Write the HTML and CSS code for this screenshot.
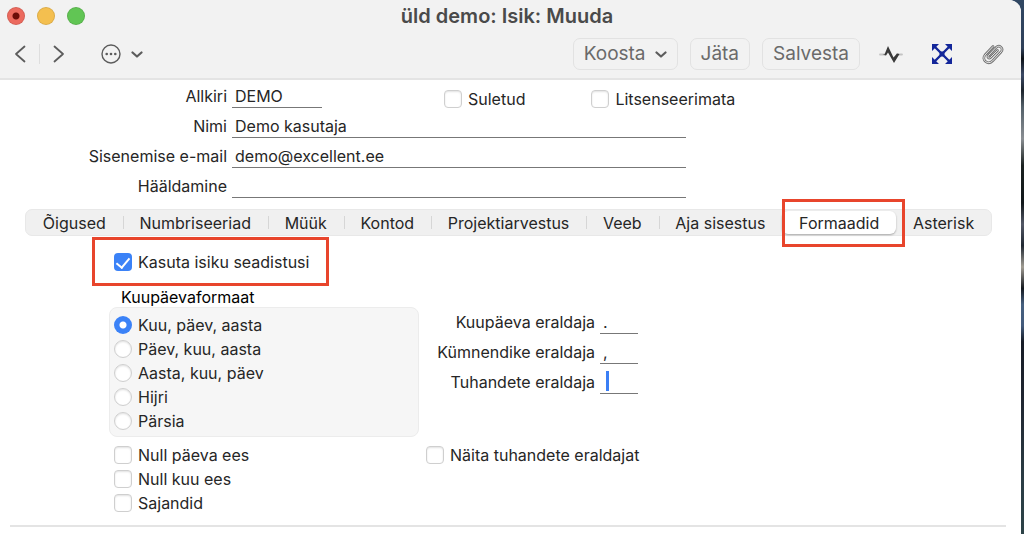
FILE: index.html
```html
<!DOCTYPE html>
<html lang="et">
    <head>
        <meta charset="utf-8">
        <meta name="viewport" content="width=device-width, initial-scale=1">
        <title>üld demo: Isik: Muuda</title>
        <link rel="stylesheet" href="styles.css">
    </head>
    <body>
        <div class="window">
            <header class="header">
                <div class="titlebar">
                    <div class="lights">
                        <span class="light close"></span>
                        <span class="light minimize"></span>
                        <span class="light maximize"></span>
                    </div>
                    <h1 class="title">üld demo: Isik: Muuda</h1>
                </div>
                <div class="toolbar">
                    <button class="iconBtn" type="button" aria-label="Eelmine">
                        <svg width="20" height="20" viewBox="0 0 20 20"><path d="M14.500 2.500L6 10l8.500 7.500"/></svg>
                    </button>
                    <span class="toolLine"></span>
                    <button class="iconBtn" type="button" aria-label="Järgmine">
                        <svg width="20" height="20" viewBox="0 0 20 20"><path d="M5.500 2.500L14 10l-8.500 7.500"/></svg>
                    </button>
                    <button class="iconBtn more" type="button" aria-label="Valikud">
                        <svg width="20" height="20" viewBox="0 0 20 20"><circle cx="10" cy="10" r="9" stroke-width="1.400"/><g class="solid"><circle cx="5.700" cy="10" r="1.300"/><circle cx="10" cy="10" r="1.300"/><circle cx="14.300" cy="10" r="1.300"/></g></svg>
                        <svg width="12" height="20" viewBox="0 0 12 20"><path d="M1.500 8.500l4.500 4 4.500-4" stroke-width="2.200"/></svg>
                    </button>
                    <div class="actions">
                        <button class="btn" type="button">Koosta
                            <svg width="12" height="20" viewBox="0 0 12 20"><path d="M1.500 8.500l4.500 4 4.500-4" stroke-width="2.200"/></svg>
                        </button>
                        <button class="btn" type="button">Jäta</button>
                        <button class="btn" type="button">Salvesta</button>
                    </div>
                    <div class="tools">
                        <button class="iconBtn" type="button" aria-label="Tegevused">
                            <svg width="24" height="24" viewBox="0 0 24 24"><path class="faint" d="M1 12.500h5M18 12.500h5"/><path class="pulse" d="M3.500 12.500h2L9 4l5.500 11.500L18 11.500l2.500 0.500-5.500 9L9 10.500l-2 3z"/></svg>
                        </button>
                        <button class="iconBtn" type="button" aria-label="Lingid">
                            <svg width="22" height="22" viewBox="0 0 22 22"><path class="cross" d="M1 1h7L1 8zM21 1v7l-7-7zM1 21v-7l7 7zM21 21h-7l7-7zM8.500 8.500h5v5h-5z"/><path class="crossLine" d="M4 4l14 14M18 4L4 18"/></svg>
                        </button>
                        <button class="iconBtn" type="button" aria-label="Manused">
                            <svg width="24" height="24" viewBox="0 0 24 24"><path class="clip" d="M16.500 8.500L9.500 15.500C8 17 6 15.500 7.500 13.500L15 5.500C18.500 2 23 6.500 20 10L11.500 19C7 23.500 0 18 4 13L12 4.500"/><path class="clipInner" d="M16.500 8.500L9.500 15.500C8 17 6 15.500 7.500 13.500L15 5.500C18.500 2 23 6.500 20 10L11.500 19C7 23.500 0 18 4 13L12 4.500"/></svg>
                        </button>
                    </div>
                </div>
            </header>

            <form class="content">
                <div class="person">
                    <label for="signature">Allkiri</label>
                    <div class="line">
                        <input class="field short" id="signature" type="text" value="DEMO">
                        <div class="flags">
                            <label class="check"><input type="checkbox">Suletud</label>
                            <label class="check"><input type="checkbox">Litsenseerimata</label>
                        </div>
                    </div>
                    <label for="name">Nimi</label>
                    <input class="field" id="name" type="text" value="Demo kasutaja">
                    <label for="email">Sisenemise e-mail</label>
                    <input class="field" id="email" type="text" value="demo@excellent.ee">
                    <label for="spoken">Hääldamine</label>
                    <input class="field" id="spoken" type="text">
                </div>

                <nav class="tabs">
                    <button class="tab" type="button">Õigused</button>
                    <button class="tab" type="button">Numbriseeriad</button>
                    <button class="tab" type="button">Müük</button>
                    <button class="tab" type="button">Kontod</button>
                    <button class="tab" type="button">Projektiarvestus</button>
                    <button class="tab" type="button">Veeb</button>
                    <button class="tab" type="button">Aja sisestus</button>
                    <button class="tab active" type="button">Formaadid<span class="marker"></span></button>
                    <button class="tab" type="button">Asterisk</button>
                </nav>

                <label class="check useOwn"><input type="checkbox" checked>Kasuta isiku seadistusi</label>

                <div class="formats">
                    <div class="dateFormat" role="radiogroup" aria-labelledby="dateTitle">
                        <div class="groupTitle" id="dateTitle">Kuupäevaformaat</div>
                        <div class="group">
                            <label class="check"><input type="radio" name="date" checked>Kuu, päev, aasta</label>
                            <label class="check"><input type="radio" name="date">Päev, kuu, aasta</label>
                            <label class="check"><input type="radio" name="date">Aasta, kuu, päev</label>
                            <label class="check"><input type="radio" name="date">Hijri</label>
                            <label class="check"><input type="radio" name="date">Pärsia</label>
                        </div>
                    </div>
                    <div class="separators">
                        <label for="dateSep">Kuupäeva eraldaja</label>
                        <input class="field" id="dateSep" type="text" value=".">
                        <label for="decimalSep">Kümnendike eraldaja</label>
                        <input class="field" id="decimalSep" type="text" value=",">
                        <label for="thousandSep">Tuhandete eraldaja</label>
                        <div class="caretBox">
                            <input class="field" id="thousandSep" type="text">
                            <span class="caret"></span>
                        </div>
                    </div>
                    <div class="zeros">
                        <label class="check"><input type="checkbox">Null päeva ees</label>
                        <label class="check"><input type="checkbox">Null kuu ees</label>
                        <label class="check"><input type="checkbox">Sajandid</label>
                    </div>
                    <div>
                        <label class="check"><input type="checkbox">Näita tuhandete eraldajat</label>
                    </div>
                </div>
                <hr class="rule">
            </form>
        </div>
    </body>
</html>
```

FILE: styles.css
```css
*{
    box-sizing: border-box;
}

body{
    margin: 0;
    padding-right: 3px;
    background: linear-gradient(#304763 0%, #2f4059 9%, #0d1218 11%, #3c4a66 14%, #1c242c 17%, #536069 20%, #8a8f93 26%, #1a2120 31%, #10171a 38%, #535866 42%, #202832 46%, #a09c93 50%, #14181f 54%, #46607f 57%, #435b7c 61%, #161c26 64%, #202631 75%, #2b3d45 90%, #2c4247 100%);
    font-family: Inter, "Liberation Sans", sans-serif;
    font-size: 16px;
    line-height: 20px;
    color: #262626;
}

button, input{
    font: inherit;
    color: inherit;
    margin: 0;
}

button{
    border: none;
    background: none;
    padding: 0;
}

.window{
    min-height: 100vh;
    background: #fff;
    border-top-right-radius: 12px;
    overflow: hidden;
}

/* title bar and tools */
.header{
    background: #f2f2f2;
    border-bottom: 2px solid #e4e4e4;
}

.titlebar{
    display: grid;
    grid-template-columns: 1fr auto 1fr;
    align-items: center;
    height: 32px;
    padding: 0 14px 0 7px;
}

.lights{
    display: flex;
    gap: 12px;
}

.light{
    width: 18px;
    height: 18px;
    border-radius: 50%;
    border: 1px solid rgba(0, 0, 0, 0.1);
}

.close{
    background: radial-gradient(circle, #6c0d08 3px, #ec6a5e 4px);
}

.minimize{
    background: #f4bf4f;
}

.maximize{
    background: #61c554;
}

.title{
    margin: 0;
    font-size: 20px;
    font-weight: 600;
    color: #4a4a4a;
}

.toolbar{
    display: flex;
    align-items: center;
    height: 46px;
    padding: 0 16px 2px 10px;
    color: #6a6a6a;
}

.iconBtn{
    display: flex;
    gap: 10px;
}

svg{
    display: block;
    fill: none;
    stroke: #5c5c5c;
    stroke-width: 1.8;
    stroke-linecap: round;
    stroke-linejoin: round;
}

.solid{
    fill: #5c5c5c;
    stroke: none;
}

.toolLine{
    width: 1px;
    height: 20px;
    margin: 0 9px;
    background: #dedede;
}

.more{
    margin-left: 32px;
}

.actions{
    display: flex;
    gap: 12px;
    margin-left: auto;
}

.btn{
    display: flex;
    align-items: center;
    gap: 9px;
    height: 32px;
    padding: 0 10px;
    border: 1px solid #e2e2e2;
    border-radius: 7px;
    font-size: 19px;
}

.tools{
    display: flex;
    align-items: center;
    gap: 28px;
    margin-left: 19px;
}

.faint{
    stroke: #c4c4c4;
}

.pulse{
    fill: #3a3a3a;
    stroke: none;
}

.cross{
    fill: #14279a;
    stroke: none;
}

.crossLine{
    stroke: #14279a;
    stroke-width: 2.4;
}

.clip{
    stroke: #757575;
    stroke-width: 2.6;
}

.clipInner{
    stroke: #f2f2f2;
    stroke-width: 0.9;
}

/* form */
.content{
    padding: 4px 15px 6px 10px;
}

.person{
    display: grid;
    grid-template-columns: 217px 454px;
    column-gap: 5px;
    row-gap: 6px;
    align-items: center;
}

.person > label, .separators > label{
    text-align: right;
}

.line{
    display: flex;
    height: 24px;
}

.field{
    display: block;
    width: 100%;
    height: 24px;
    padding: 0 3px;
    border: none;
    border-bottom: 1px solid #777;
    border-radius: 0;
    background: none;
    outline: none;
}

.short{
    width: 90px;
}

.flags{
    display: flex;
    gap: 66px;
    padding-top: 3px;
    margin-left: 122px;
}

.check{
    display: flex;
    align-items: center;
    gap: 6px;
    height: 24px;
    white-space: nowrap;
}

.check input{
    appearance: none;
    flex: none;
    width: 18px;
    height: 18px;
    border: 1px solid #cfcfcf;
    border-radius: 4px;
    background: #fff;
    box-shadow: inset 0 1px 2px rgba(0, 0, 0, 0.12);
}

.check input[type=radio]{
    border-radius: 50%;
}

.check input:checked{
    border: none;
    background: #3b82f7;
    box-shadow: none;
}

.check input[type=radio]:checked{
    background: radial-gradient(circle, #fff 3px, #3b82f7 4px);
}

.check input[type=checkbox]:checked::before{
    content: "";
    display: block;
    width: 6px;
    height: 11px;
    margin: 2px auto 0;
    border: solid #fff;
    border-width: 0 2px 2px 0;
    transform: rotate(40deg);
}

.tabs{
    display: flex;
    height: 27px;
    margin: 11px 14px 0 15px;
    border: 1px solid #e8e8e8;
    border-radius: 7px;
    background: #f0f0f0;
}

.tab{
    position: relative;
    flex: 1 1 auto;
}

.tab + .tab::before{
    content: "";
    position: absolute;
    left: 0;
    top: 6px;
    bottom: 6px;
    width: 1px;
    background: #d6d6d6;
}

.tab.active{
    margin: 1px 0;
    border-radius: 6px;
    background: #fff;
    box-shadow: 0 1px 2px rgba(0, 0, 0, 0.3);
}

.tab.active::before, .tab.active + .tab::before{
    display: none;
}

.marker{
    position: absolute;
    top: -12px;
    right: -9px;
    bottom: -13px;
    left: 0;
    border: 3px solid #e8452c;
}

.useOwn{
    width: fit-content;
    height: 49px;
    margin: 1px 0 0 82px;
    padding: 0 17px 0 19px;
    border: 3px solid #e8452c;
}

.formats{
    display: grid;
    grid-template-columns: 310px 1fr;
    column-gap: 7px;
    row-gap: 6px;
    margin-left: 99px;
}

.groupTitle{
    padding: 1px 0 0 12px;
    color: #000;
}

.group{
    padding: 5px 4px 3px;
    border: 1px solid #ececec;
    border-radius: 8px;
    background: #f6f6f6;
}

.separators{
    display: grid;
    grid-template-columns: 169px 38px;
    column-gap: 5px;
    row-gap: 6px;
    align-content: start;
    align-items: center;
    padding-top: 24px;
}

.zeros{
    padding-left: 5px;
}

.caretBox{
    position: relative;
}

.caret{
    position: absolute;
    left: 6px;
    top: 1px;
    width: 3px;
    height: 20px;
    background: #3b7ff5;
}

.rule{
    margin: 10px 0 0;
    border: none;
    border-top: 2px solid #e4e4e4;
}
```
